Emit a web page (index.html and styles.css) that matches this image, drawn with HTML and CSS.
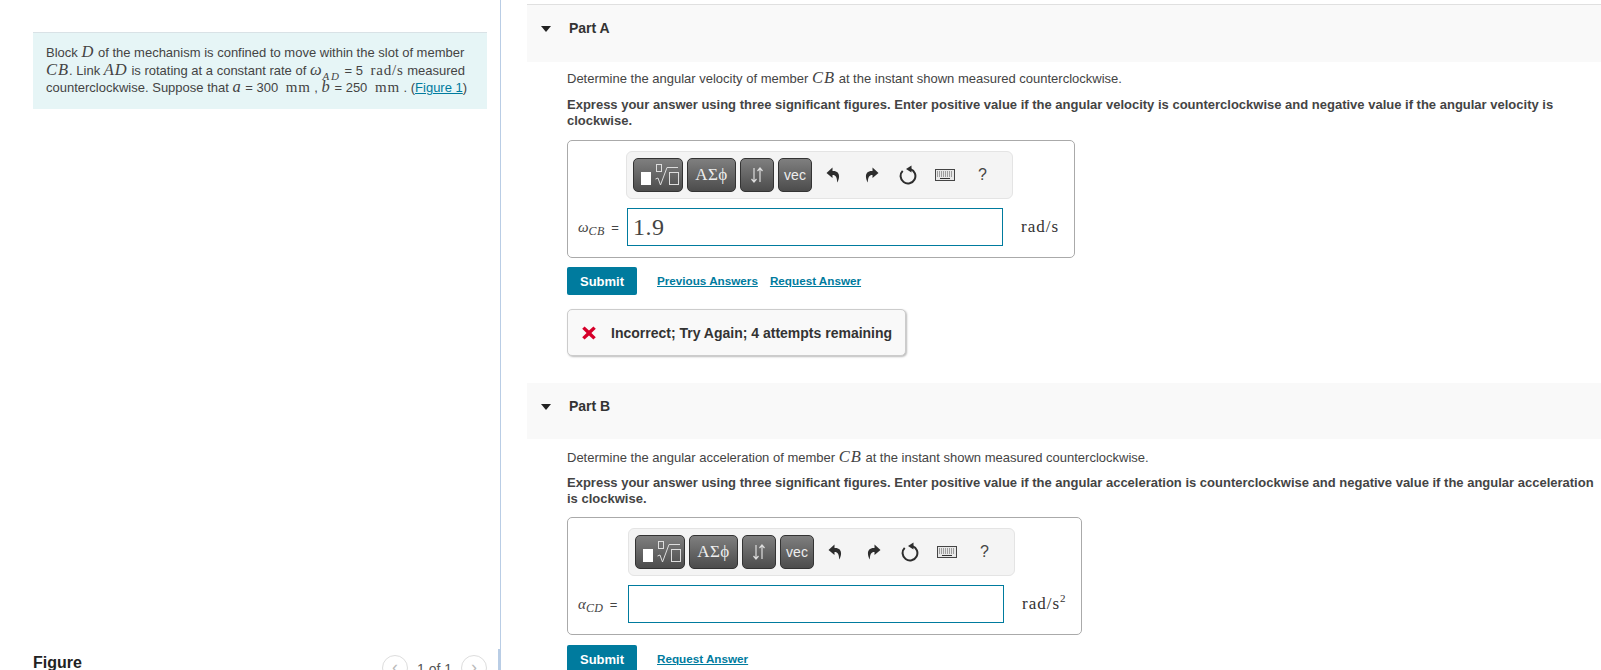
FILE: index.html
```html
<!DOCTYPE html>
<html lang="en">
<head>
<meta charset="utf-8">
<title>Part A and Part B</title>
<link rel="stylesheet" href="styles.css">
</head>
<body>
<svg class="defs" width="0" height="0" aria-hidden="true">
  <symbol id="i-undo" viewBox="0 0 14 16"><path d="M6.5 0.5 L0.5 6 L6.5 11 V8 C9.5 7.8 11 10 11.2 15.5 C14 11 14.5 3.6 6.5 4 Z"/></symbol>
  <symbol id="i-redo" viewBox="0 0 14 16"><path d="M7.5 0.5 L13.5 6 L7.5 11 V8 C4.5 7.8 3 10 2.8 15.5 C0 11 -0.5 3.6 7.5 4 Z"/></symbol>
  <symbol id="i-reset" viewBox="0 0 18 20"><path d="M3.7 5.9 A7.4 7.4 0 1 0 11.5 4.1" fill="none" stroke="#2d2d2d" stroke-width="2"/><path d="M7 4 L12.5 0.5 V7.5 Z" fill="#2d2d2d"/></symbol>
  <symbol id="i-keys" viewBox="0 0 20 12"><rect x="0.5" y="0.5" width="19" height="11" fill="#e8e8e8" stroke="#444"/><path d="M2 3 H18 M2 5 H18 M2 7 H18" stroke="#555" stroke-width="1" stroke-dasharray="1 1"/><path d="M5 9.5 H15" stroke="#333"/></symbol>
  <symbol id="i-tmpl" viewBox="0 0 48 32"><rect x="7" y="13" width="10" height="13" fill="#fff"/><rect x="22.5" y="5.5" width="5" height="7" fill="none" stroke="#ddd"/><path d="M21.5 20 L24 19 L26.5 26 L33 8.5 H44" fill="none" stroke="#ddd"/><rect x="35.5" y="13.5" width="9" height="12" fill="none" stroke="#ddd"/></symbol>
  <symbol id="i-arrows" viewBox="0 0 16 18"><path d="M5 2 V16 M2.5 13 L5 16 L7.5 13 M11 16 V2 M8.5 5 L11 2 L13.5 5" fill="none" stroke="#ddd" stroke-width="1.2"/></symbol>
</svg>
<div class="page">
  <aside class="left">
    <div class="intro">
      Block <i class="m">D</i> of the mechanism is confined to move within the slot of member<br>
      <i class="m">CB</i>. Link <i class="m">AD</i> is rotating at a constant rate of <i class="m">ω<sub>AD</sub></i> = 5 <span class="u">rad/s</span> measured<br>
      counterclockwise. Suppose that <i class="m">a</i> = 300 <span class="u">mm</span> , <i class="m">b</i> = 250 <span class="u">mm</span> . (<a href="#">Figure 1</a>)
    </div>
    <div class="figure-bar">
      <h2>Figure</h2>
      <div class="pager">
        <span class="pg">‹</span>
        <span class="pg-text">1 of 1</span>
        <span class="pg">›</span>
      </div>
    </div>
  </aside>
  <main class="right">
    <section class="part">
      <header class="part-head part-head-first"><span class="tri"></span><h3>Part A</h3></header>
      <div class="part-body">
        <p class="q">Determine the angular velocity of member <i class="m">CB</i> at the instant shown measured counterclockwise.</p>
        <p class="inst">Express your answer using three significant figures. Enter positive value if the angular velocity is counterclockwise and negative value if the angular velocity is clockwise.</p>
        <div class="answer answer-a">
          <div class="toolbar">
            <span class="btn b-tmpl"><svg class="tmpl"><use href="#i-tmpl"/></svg></span>
            <span class="btn b-greek">ΑΣϕ</span>
            <span class="btn b-arrows"><svg class="arrows"><use href="#i-arrows"/></svg></span>
            <span class="btn b-vec">vec</span>
            <svg class="tool t-undo"><use href="#i-undo"/></svg>
            <svg class="tool t-redo"><use href="#i-redo"/></svg>
            <svg class="tool t-reset"><use href="#i-reset"/></svg>
            <svg class="tool t-keys"><use href="#i-keys"/></svg>
            <span class="help">?</span>
          </div>
          <div class="row">
            <span class="lbl"><i class="m">ω<sub>CB</sub></i> =</span>
            <div class="field">1.9</div>
            <span class="unit">rad/s</span>
          </div>
        </div>
        <div class="actions">
          <button class="submit">Submit</button>
          <a href="#">Previous Answers</a>
          <a href="#">Request Answer</a>
        </div>
        <div class="feedback">
          <svg class="x" viewBox="0 0 14 14"><path d="M2.6 0.4 L7 4.6 L11.4 0.4 L13.8 2.8 L9.4 7 L13.8 11.2 L11.4 13.6 L7 9.4 L2.6 13.6 L0.2 11.2 L4.6 7 L0.2 2.8 Z" fill="#d6002a"/></svg>
          <span>Incorrect; Try Again; 4 attempts remaining</span>
        </div>
      </div>
    </section>
    <section class="part part-b">
      <header class="part-head"><span class="tri"></span><h3>Part B</h3></header>
      <div class="part-body">
        <p class="q">Determine the angular acceleration of member <i class="m">CB</i> at the instant shown measured counterclockwise.</p>
        <p class="inst">Express your answer using three significant figures. Enter positive value if the angular acceleration is counterclockwise and negative value if the angular acceleration is clockwise.</p>
        <div class="answer answer-b">
          <div class="toolbar">
            <span class="btn b-tmpl"><svg class="tmpl"><use href="#i-tmpl"/></svg></span>
            <span class="btn b-greek">ΑΣϕ</span>
            <span class="btn b-arrows"><svg class="arrows"><use href="#i-arrows"/></svg></span>
            <span class="btn b-vec">vec</span>
            <svg class="tool t-undo"><use href="#i-undo"/></svg>
            <svg class="tool t-redo"><use href="#i-redo"/></svg>
            <svg class="tool t-reset"><use href="#i-reset"/></svg>
            <svg class="tool t-keys"><use href="#i-keys"/></svg>
            <span class="help">?</span>
          </div>
          <div class="row">
            <span class="lbl"><i class="m">α<sub>CD</sub></i> =</span>
            <div class="field"></div>
            <span class="unit">rad/s<sup>2</sup></span>
          </div>
        </div>
        <div class="actions">
          <button class="submit">Submit</button>
          <a href="#">Request Answer</a>
        </div>
      </div>
    </section>
  </main>
</div>
</body>
</html>
```
FILE: styles.css
```css
* { box-sizing: border-box; }
html, body { margin: 0; height: 670px; overflow: hidden; background: #fff; }
body { font-family: "Liberation Sans", Arial, sans-serif; font-size: 13px; color: #444; }
.defs { position: absolute; }
a { color: #007b9e; text-decoration: underline; }
p { margin: 0; }

.page { display: flex; height: 670px; overflow: hidden; }

.left { width: 501px; flex: none; border-right: 1px solid #b9cde5; display: flex; flex-direction: column; padding: 32px 13px 0 33px; }
.intro { height: 77px; flex: none; background: #e6f5f6; border-top: 1px solid #d9e2e6; padding: 11px 13px 0; line-height: 17.5px; white-space: nowrap; color: #444; }
.m { font-family: "Liberation Serif", serif; font-style: italic; font-size: 16.5px; letter-spacing: 1px; line-height: 0; }
.m sub { font-size: 11px; line-height: 0; letter-spacing: 1.8px; vertical-align: -5px; }
.u { font-family: "Liberation Serif", serif; font-size: 15px; letter-spacing: 0.8px; margin-left: 4px; line-height: 0; }

.figure-bar { margin-top: 540px; margin-right: -13px; border-right: 2px solid #b9cde5; display: flex; justify-content: space-between; height: 21px; flex: none; padding: 5px 11px 0 0; }
.figure-bar h2 { margin: 0; font-size: 16px; font-weight: bold; color: #222; line-height: 18px; }
.pager { display: flex; align-items: flex-start; gap: 9px; font-size: 14px; color: #555; }
.pg { width: 26px; height: 26px; margin-top: 1px; border: 1px solid #ddd; border-radius: 50%; text-align: center; color: #bbb; line-height: 22px; font-size: 18px; }
.pg-text { padding-top: 7px; }

.right { flex: 1; min-width: 0; padding: 4px 0 0 26px; }
.part-head { height: 56px; background: #f9f9f9; display: flex; align-items: flex-start; padding: 15px 0 0 14px; }
.part-head-first { height: 58px; border-top: 1px solid #e0e0e0; }
.tri { width: 0; height: 0; margin-top: 6px; border: 5.5px solid transparent; border-top: 6px solid #222; border-bottom: 0; }
.part-head h3 { margin: 0 0 0 18px; font-size: 14px; line-height: 16px; font-weight: bold; color: #333; }
.part-body { padding: 8px 0 0 40px; }
.part-b { margin-top: 27px; }
.part-b .part-body { padding-top: 10px; }
.q { line-height: 18px; }
.inst { margin-top: 9px; font-weight: bold; line-height: 15.5px; color: #444; }
.part-b .inst { margin-top: 8px; }

.answer { margin-top: 12px; height: 118px; border: 1px solid #aaa; border-radius: 5px; padding: 10px 0 0 10px; }
.answer-a { width: 508px; }
.answer-b { width: 515px; margin-top: 11px; }
.toolbar { height: 48px; width: 387px; margin-left: 48px; display: flex; align-items: center; background: #f4f4f4; border: 1px solid #e4e4e4; border-radius: 6px; padding-left: 6px; }
.answer-b .toolbar { margin-left: 50px; }
.btn { height: 34px; margin-right: 4px; display: flex; align-items: center; justify-content: center; color: #fff; background: linear-gradient(#7f7f7f, #4c4c4c); border: 1px solid #333; border-radius: 5px; }
.b-tmpl { width: 50px; }
.tmpl { width: 48px; height: 32px; }
.b-greek { width: 49px; font-family: "Liberation Serif", serif; font-size: 17px; letter-spacing: 0.5px; color: #eee; }
.b-arrows { width: 34px; }
.arrows { width: 16px; height: 18px; }
.b-vec { width: 34px; font-size: 14px; color: #eee; }
.tool { width: 14px; height: 16px; fill: #2d2d2d; flex: none; }
.t-undo { margin-left: 10px; margin-right: 25px; }
.t-redo { margin-right: 20px; }
.t-reset { width: 18px; height: 20px; margin-right: 18px; }
.t-keys { width: 20px; height: 12px; }
.help { margin-left: 23px; font-size: 16px; color: #444; }

.row { display: flex; align-items: center; margin-top: 9px; }
.lbl { width: 41px; flex: none; font-size: 13px; color: #444; white-space: nowrap; }
.lbl .m { letter-spacing: 0; font-size: 15px; margin-right: 3px; }
.lbl sub { font-size: 12px; letter-spacing: 0.3px; vertical-align: -3px; }
.field { width: 376px; height: 38px; margin-left: 8px; border: 1px solid #007b9e; padding-left: 5px; font-family: "Liberation Serif", serif; font-size: 24px; letter-spacing: 0.5px; line-height: 36px; color: #444; }
.answer-b .field { margin-left: 9px; }
.unit { margin-left: 18px; font-family: "Liberation Serif", serif; font-size: 17px; letter-spacing: 1px; color: #333; }
.unit sup { font-size: 11px; line-height: 0; }

.actions { display: flex; align-items: center; margin-top: 9px; }
.answer-b + .actions { margin-top: 10px; }
.actions a { margin-right: 12px; margin-bottom: 2px; font-size: 11.7px; font-weight: bold; }
.submit { width: 70px; height: 28px; margin-right: 20px; padding: 0; border: 0; border-radius: 2px; background: #007b9e; color: #fff; font: bold 13px "Liberation Sans", Arial, sans-serif; }
.feedback { width: 339px; height: 47px; margin-top: 14px; display: flex; align-items: center; gap: 15px; padding-left: 14px; background: #f9f9f9; border: 1px solid #ccc; border-radius: 5px; box-shadow: 1px 1px 2px #bbb; font-size: 14px; font-weight: bold; color: #333; white-space: nowrap; }
.x { width: 14px; height: 14px; flex: none; }
```
